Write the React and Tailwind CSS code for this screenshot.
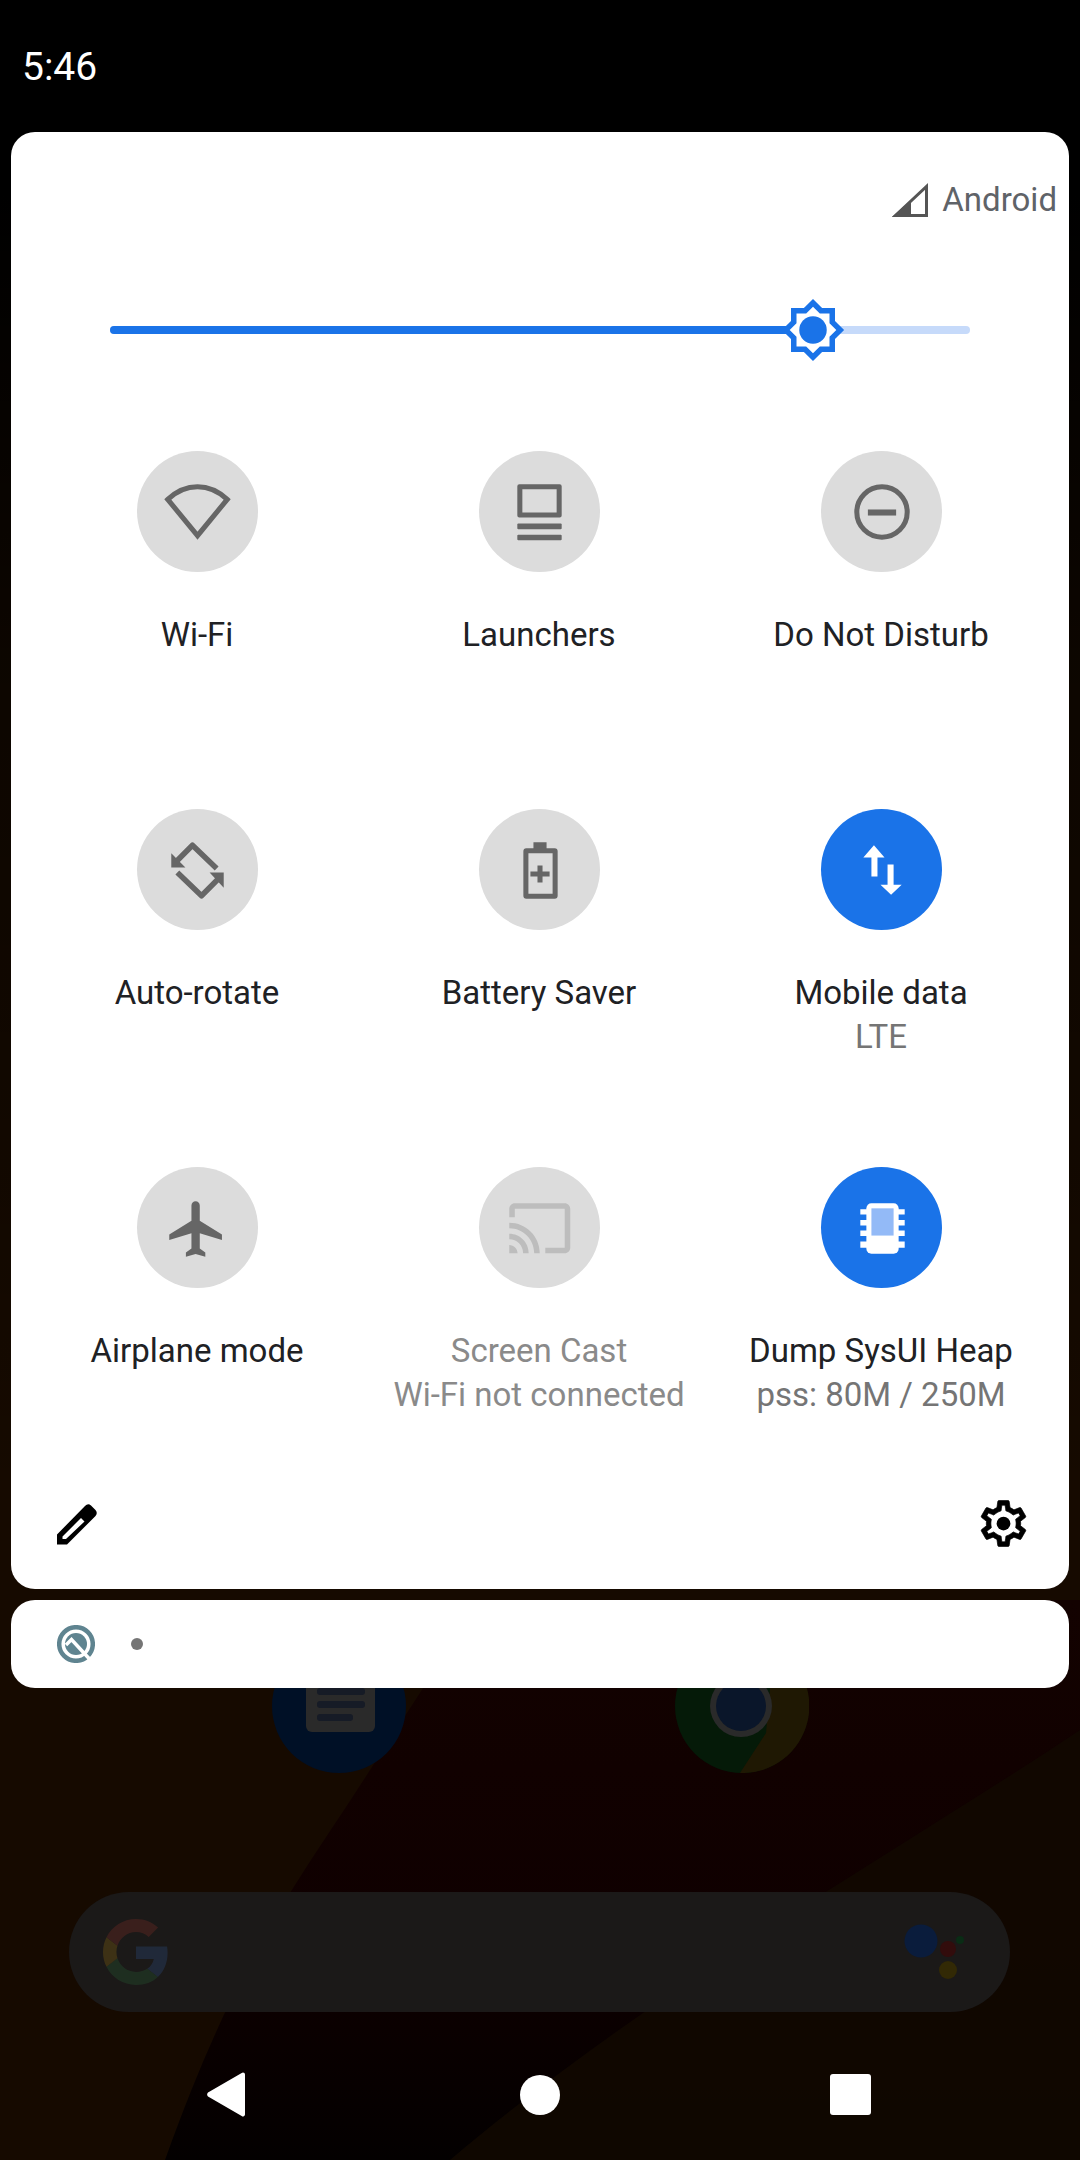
import React from 'react';

const WifiIcon = () => (
  <path d="M60 84 L30.500 48 Q 44 35.500 60 35.500 Q 76 35.500 89.500 48 Z" fill="none" stroke="#666" strokeWidth="5" strokeLinejoin="miter" />
);

const LaunchersIcon = () => (
  <g fill="#666">
    <path fillRule="evenodd" d="M40 33h40a2 2 0 0 1 2 2v29a2 2 0 0 1-2 2H40a2 2 0 0 1-2-2V35a2 2 0 0 1 2-2zm3 5v23h34V38z" />
    <rect x="38" y="72" width="44" height="5.500" rx="1" />
    <rect x="38" y="83" width="44" height="5.500" rx="1" />
  </g>
);

const DndIcon = () => (
  <g>
    <circle cx="60.500" cy="60.500" r="25" fill="none" stroke="#666" strokeWidth="5" />
    <rect x="46.500" y="58" width="28" height="6" fill="#666" />
  </g>
);

const RotateIcon = () => (
  <g>
    <path d="M39 52 L55 36 L79 59" fill="none" stroke="#666" strokeWidth="5.500" strokeLinejoin="round" />
    <path d="M81 69 L64 86 L40 63" fill="none" stroke="#666" strokeWidth="5.500" strokeLinejoin="round" />
    <path d="M34 44 V58 H48 Z M86 78 V63 H72 Z" fill="#666" />
  </g>
);

const BatteryIcon = () => (
  <g fill="#666">
    <path fillRule="evenodd" d="M54 33h13v6h8a3 3 0 0 1 3 3v44a3 3 0 0 1-3 3H47a3 3 0 0 1-3-3V42a3 3 0 0 1 3-3h7zm-5 11v40h24V44z" />
    <path d="M58 56h5v6h7v5h-7v6h-5v-6h-7v-5h7z" />
  </g>
);

const DataIcon = () => (
  <path fill="#fff" d="M52.500 36 L63 48 H56 V67 H50 V48 H42 Z M69.500 85 L59 75 H66 V55 H72 V75 H80 Z" />
);

const PlaneIcon = () => (
  <path
    transform="translate(26.500 28.500) scale(2.750)"
    fill="#666"
    d="M21 16v-2l-8-5V3.500c0-.83-.67-1.500-1.500-1.500S10 2.670 10 3.500V9l-8 5v2l8-2.500V19l-2 1.500V22l3.500-1 3.500 1v-1.500L13 19v-5.500l8 2.500z"
  />
);

const CastIcon = () => (
  <path
    transform="translate(27.250 27.750) scale(2.750)"
    fill="#bdbdbd"
    d="M21 3H3c-1.100 0-2 .9-2 2v3h2V5h18v14h-7v2h7c1.100 0 2-.9 2-2V5c0-1.100-.9-2-2-2zM1 18v3h3c0-1.660-1.340-3-3-3zm0-4v2c2.760 0 5 2.240 5 5h2c0-3.870-3.130-7-7-7zm0-4v2c4.970 0 9 4.030 9 9h2c0-6.080-4.930-11-11-11z"
  />
);

const HeapIcon = () => (
  <g>
    <rect x="45" y="36" width="32" height="50" rx="5" fill="#fff" />
    <path fill="#fff" d="M39 42h44v5H39zM39 52.500h44v5.500H39zM39 63h44v5.500H39zM39 74h44v6H39z" />
    <rect x="50" y="41" width="22" height="27" fill="#93baf7" />
  </g>
);

const tiles = [
  { label: 'Wi-Fi', icon: <WifiIcon /> },
  { label: 'Launchers', icon: <LaunchersIcon /> },
  { label: 'Do Not Disturb', icon: <DndIcon /> },
  { label: 'Auto-rotate', icon: <RotateIcon /> },
  { label: 'Battery Saver', icon: <BatteryIcon /> },
  { label: 'Mobile data', sub: 'LTE', icon: <DataIcon />, active: true },
  { label: 'Airplane mode', icon: <PlaneIcon /> },
  { label: 'Screen Cast', sub: 'Wi-Fi not connected', icon: <CastIcon />, disabled: true },
  { label: 'Dump SysUI Heap', sub: 'pss: 80M / 250M', icon: <HeapIcon />, active: true },
];

const Tile = ({ label, sub, icon, active, disabled }) => (
  <div className="flex flex-col items-center">
    <div className={`w-[121px] h-[121px] rounded-full ${active ? 'bg-[#1a73e8]' : 'bg-[#dcdcdc]'}`}>
      <svg viewBox="0 0 120 120" className="w-full h-full">{icon}</svg>
    </div>
    <div className={`mt-[41px] text-[33px] leading-[44px] whitespace-nowrap ${disabled ? 'text-[#8a8a8a]' : 'text-[#202124]'}`}>
      {label}
    </div>
    {sub && <div className={`text-[33px] leading-[44px] whitespace-nowrap ${disabled ? 'text-[#8a8a8a]' : 'text-[#757575]'}`}>{sub}</div>}
  </div>
);

const Wallpaper = () => (
  <svg viewBox="0 0 1080 2160" className="absolute inset-0 w-full h-full">
    <defs>
      <linearGradient id="scrim" x1="0" y1="0" x2="0" y2="1">
        <stop offset="0" stopColor="#000" stopOpacity="1" />
        <stop offset="0.09" stopColor="#000" stopOpacity="1" />
        <stop offset="0.3" stopColor="#000" stopOpacity="0.45" />
        <stop offset="0.7" stopColor="#000" stopOpacity="0" />
      </linearGradient>
      <linearGradient id="band" x1="0" y1="0" x2="0" y2="1">
        <stop offset="0" stopColor="#130200" />
        <stop offset="0.6" stopColor="#0f0000" />
        <stop offset="1" stopColor="#030000" />
      </linearGradient>
      <linearGradient id="fade" x1="0" y1="1" x2="1" y2="0">
        <stop offset="0.35" stopColor="#120800" stopOpacity="0" />
        <stop offset="0.55" stopColor="#120800" stopOpacity="1" />
      </linearGradient>
    </defs>
    <rect width="1080" height="2160" fill="#160a00" />
    <path d="M480 1600 L1080 1600 L1080 2160 L165 2160 C 240 1950 300 1880 370 1770 Z" fill="url(#band)" />
    <path d="M1080 1730 C 900 1850 650 1990 450 2160 L1080 2160 Z" fill="#120800" opacity="0.85" />
    <rect width="1080" height="2160" fill="url(#scrim)" />
  </svg>
);

const HomeLayer = () => (
  <div className="absolute inset-0 pt-[1639px]">
    <div className="flex pl-[272px] gap-[269px]">
      <svg viewBox="0 0 134 134" className="w-[134px] h-[134px]">
        <circle cx="67" cy="67" r="67" fill="#001026" />
        <rect x="34" y="0" width="69" height="93" rx="6" fill="#2a2a2a" />
        <rect x="45" y="49" width="48" height="7" rx="3" fill="#161b26" />
        <rect x="45" y="62" width="48" height="7" rx="3" fill="#161b26" />
        <rect x="45" y="75" width="36" height="7" rx="3" fill="#161b26" />
      </svg>
      <svg viewBox="0 0 134 134" className="w-[134px] h-[134px]">
        <circle cx="67" cy="67" r="67" fill="#051a08" />
        <path d="M95 6 A67 67 0 0 1 65 134 L91 94 L95 50 Z" fill="#1f1803" />
        <circle cx="66" cy="67" r="31" fill="#2a2a2a" />
        <circle cx="66" cy="67" r="25" fill="#0a162a" />
      </svg>
    </div>
    <div className="mt-[119px] ml-[69px] w-[941px] h-[120px] rounded-full bg-[#1b1918] flex items-center justify-between pl-[34px] pr-[44px]">
      <svg viewBox="0 0 48 48" className="w-[66px] h-[66px] opacity-15">
        <path fill="#4285F4" d="M46.980 24.550c0-1.570-.15-3.090-.38-4.550H24v9.020h12.940c-.58 2.960-2.260 5.480-4.780 7.180l7.730 6c4.510-4.180 7.090-10.360 7.090-17.650z" />
        <path fill="#34A853" d="M24 48c6.480 0 11.930-2.130 15.890-5.810l-7.730-6c-2.150 1.450-4.920 2.300-8.160 2.300-6.260 0-11.570-4.220-13.470-9.910l-7.980 6.190C6.510 42.620 14.620 48 24 48z" />
        <path fill="#FBBC05" d="M10.530 28.590c-.48-1.450-.76-2.990-.76-4.590s.27-3.140.76-4.590l-7.980-6.190C.92 16.460 0 20.120 0 24c0 3.880.92 7.540 2.560 10.780l7.970-6.190z" />
        <path fill="#EA4335" d="M24 9.500c3.540 0 6.710 1.220 9.210 3.600l6.850-6.850C35.900 2.380 30.470 0 24 0 14.620 0 6.510 5.380 2.560 13.220l7.980 6.190C12.430 13.720 17.740 9.500 24 9.500z" />
      </svg>
      <svg viewBox="0 0 62 56" className="w-[62px] h-[56px]">
        <circle cx="17" cy="17" r="16.500" fill="#0a1c3c" />
        <circle cx="44" cy="25" r="8" fill="#320c0c" />
        <circle cx="44" cy="46" r="9" fill="#322905" />
        <circle cx="56" cy="16" r="4" fill="#0a2c15" />
      </svg>
    </div>
  </div>
);

const App = () => {
  return (
    <div className="relative w-[1080px] h-[2160px] overflow-hidden bg-black font-['Roboto',sans-serif]">
      <Wallpaper />
      <HomeLayer />

      <div className="relative h-full flex flex-col">
        <div className="h-[132px] pl-[22px] pt-[45px] text-[39px] leading-[44px] text-white">5:46</div>

        <div className="mx-[11px] h-[1457px] bg-white rounded-[24px] flex flex-col">
          <div className="mt-[46px] h-[44px] flex items-center justify-end gap-[14px] pr-[12px]">
            <svg viewBox="0 0 36 34" className="w-[36px] h-[34px]">
              <path d="M34.500 3.500 V32.500 H3.500 Z" fill="none" stroke="#555" strokeWidth="3" />
              <path d="M19 17 V34 H0 Z" fill="#555" />
            </svg>
            <span className="text-[33px] leading-[44px] text-[#5f6368]">Android</span>
          </div>

          {/* brightness slider */}
          <div className="relative mt-[104px] ml-[99px] w-[860px] h-[8px] rounded-full bg-[#c6dafa]">
            <div className="h-full w-[703px] rounded-full bg-[#1a73e8]" />
            <svg viewBox="0 0 24 24" className="absolute left-[670px] top-[-29px] w-[66px] h-[66px]">
              <path fill="#fff" d="M12 2l3 3h4v4l3 3-3 3v4h-4l-3 3-3-3H5v-4l-3-3 3-3V5h4z" />
              <path fill="#1a73e8" d="M20 8.690V4h-4.690L12 .690 8.690 4H4v4.690L.690 12 4 15.310V20h4.690L12 23.310 15.310 20H20v-4.690L23.310 12 20 8.690zm-2 5.790V18h-3.520L12 20.480 9.520 18H6v-3.520L3.520 12 6 9.520V6h3.520L12 3.520 14.480 6H18v3.520L20.480 12 18 14.480z" />
              <circle cx="12" cy="12" r="5" fill="#1a73e8" />
            </svg>
          </div>

          <div className="mt-[117px] pl-[15px] pr-[17px] grid grid-cols-3 auto-rows-[250px] gap-y-[108px]">
            {tiles.map((t) => (
              <Tile key={t.label} {...t} />
            ))}
          </div>

          <div className="mt-auto mb-[38px] flex items-center justify-between pl-[46px] pr-[38px]">
            <svg viewBox="0 0 42 42" className="w-[42px] h-[42px]">
              <path fill="#000" fillRule="evenodd" d="M0 41.500V31.500L28 3Q31 0 34 2.500L38.500 7Q41 10 38.500 13L10 41.500ZM5.500 36V33.500L24 15L27.500 18.500L9 36Z" />
            </svg>
            <svg viewBox="0 0 24 24" className="w-[55px] h-[55px]">
              <path fill="#000" stroke="#000" strokeWidth="0.300" d="M19.430 12.980c.04-.32.07-.64.07-.98 0-.34-.03-.66-.07-.98l2.110-1.650c.19-.15.24-.42.12-.64l-2-3.460c-.09-.16-.26-.25-.44-.25-.06 0-.12.01-.17.03l-2.490 1c-.52-.4-1.080-.73-1.690-.98l-.38-2.650C14.460 2.180 14.250 2 14 2h-4c-.25 0-.46.18-.49.42l-.38 2.650c-.61.25-1.170.59-1.690.98l-2.490-1c-.06-.02-.12-.03-.18-.03-.17 0-.34.09-.43.25l-2 3.460c-.13.22-.07.49.12.64l2.110 1.650c-.04.32-.07.65-.07.98 0 .33.03.66.07.98l-2.110 1.650c-.19.15-.24.42-.12.64l2 3.460c.09.16.26.25.44.25.06 0 .12-.01.17-.03l2.490-1c.52.4 1.080.73 1.690.98l.38 2.650c.03.24.24.42.49.42h4c.25 0 .46-.18.49-.42l.38-2.650c.61-.25 1.170-.59 1.690-.98l2.490 1c.06.02.12.03.18.03.17 0 .34-.09.43-.25l2-3.460c.12-.22.07-.49-.12-.64l-2.110-1.650zm-1.980-1.710c.04.31.05.52.05.73 0 .21-.02.43-.05.73l-.14 1.130.89.7 1.080.84-.7 1.210-1.270-.51-1.040-.42-.9.68c-.43.32-.84.56-1.250.73l-1.060.43-.16 1.130-.2 1.350h-1.400l-.19-1.350-.16-1.130-1.060-.43c-.43-.18-.83-.41-1.230-.71l-.91-.7-1.060.43-1.270.51-.7-1.210 1.080-.84.89-.7-.14-1.130c-.03-.31-.05-.54-.05-.74s.02-.43.05-.73l.14-1.130-.89-.7-1.08-.84.7-1.210 1.270.51 1.040.42.9-.68c.43-.32.84-.56 1.250-.73l1.060-.43.16-1.130.2-1.350h1.390l.19 1.350.16 1.130 1.060.43c.43.18.83.41 1.230.71l.91.7 1.060-.43 1.270-.51.7 1.210-1.070.85-.89.7.14 1.130z" />
              <circle cx="12" cy="12" r="3" fill="#000" />
            </svg>
          </div>
        </div>

        <div className="mx-[11px] mt-[11px] h-[88px] bg-white rounded-[24px] flex items-center pl-[46px] gap-[36px]">
          <svg viewBox="0 0 38 38" className="w-[38px] h-[38px]">
            <circle cx="19" cy="19" r="16.800" fill="none" stroke="#5f8490" strokeWidth="4.500" />
            <circle cx="19" cy="19" r="11" fill="#5f8490" />
            <path d="M9 20 L14.500 14.500 L32 33.500" fill="none" stroke="#fff" strokeWidth="3.500" />
          </svg>
          <div className="w-[12px] h-[12px] rounded-full bg-[#757575]" />
        </div>

        <div className="mt-auto mb-[43px] flex items-center pl-[207px]">
          <svg viewBox="0 0 38 45" className="w-[38px] h-[45px]">
            <path fill="#fff" d="M36 .5a2 2 0 0 1 2 2v40a2 2 0 0 1-3.300 1.500L1 24.500a3 3 0 0 1 0-4L34.700 1a2 2 0 0 1 1.300-.5z" />
          </svg>
          <div className="ml-[275px] w-[40px] h-[40px] rounded-full bg-white" />
          <div className="ml-[270px] w-[41px] h-[41px] rounded-[3px] bg-white" />
        </div>
      </div>
    </div>
  );
};

export default App;
